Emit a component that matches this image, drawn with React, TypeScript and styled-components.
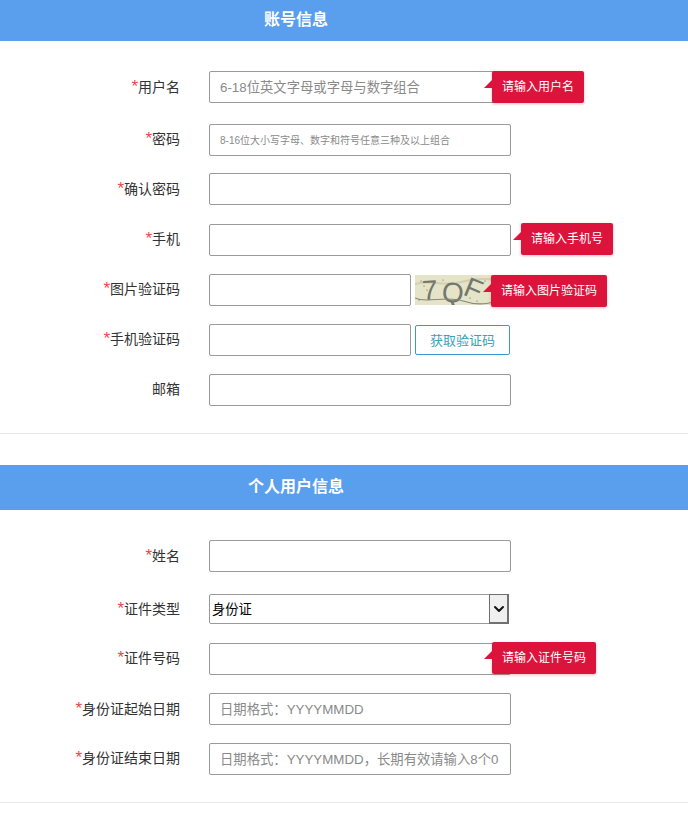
import { createGlobalStyle, styled } from "styled-components";
import { ChevronDown } from "lucide-react";

const GlobalStyle = createGlobalStyle`
  html, body {
    margin: 0;
    padding: 0;
    background: #fff;
  }
  body {
    font-family: "Liberation Sans", "Noto Sans CJK SC", sans-serif;
    color: #333;
  }
`;

const Page = styled.main`
  width: 688px;
  height: 822px;
  overflow: hidden;
`;

const Section = styled.section<{ $gap: number }>`
  padding-bottom: ${(p) => p.$gap}px;
  border-bottom: 1px solid #e8e8e8;
  margin-bottom: 31px;
`;

const SectionTitle = styled.h2<{ $height: number; $indent: number }>`
  margin: 0;
  height: ${(p) => p.$height}px;
  line-height: ${(p) => p.$height - 1}px;
  padding-left: ${(p) => p.$indent}px;
  background: #5a9eee;
  color: #fff;
  font-size: 16px;
  font-weight: 700;
`;

const Row = styled.div<{ $top: number }>`
  position: relative;
  display: flex;
  align-items: center;
  height: 32px;
  margin-top: ${(p) => p.$top}px;
`;

const Label = styled.label<{ $lift?: boolean }>`
  width: 180px;
  margin-right: 29px;
  margin-bottom: ${(p) => (p.$lift ? 2 : 0)}px;
  text-align: right;
  font-size: 14px;
  line-height: 20px;
  color: #333;
`;

const Star = styled.span`
  font-size: 17px;
  line-height: 0;
  color: #e8484a;
`;

const TextInput = styled.input<{ $short?: boolean; $small?: boolean }>`
  box-sizing: border-box;
  width: ${(p) => (p.$short ? 202 : 302)}px;
  height: 32px;
  padding: 0 10px;
  border: 1px solid #999;
  border-radius: 2px;
  outline: none;
  background: #fff;
  font-family: inherit;
  font-size: ${(p) => (p.$small ? 10 : 13.33)}px;
  color: #333;

  &::placeholder {
    color: #8a8a8a;
    opacity: 1;
  }
`;

const SelectBox = styled.div`
  position: relative;
  width: 300px;
  height: 30px;
`;

const Select = styled.select`
  box-sizing: border-box;
  display: block;
  width: 100%;
  height: 100%;
  padding: 0 2px;
  border: 1px solid #999;
  border-radius: 2px;
  outline: none;
  appearance: none;
  background: #fff;
  font-family: inherit;
  font-size: 13.3px;
  color: #000;
`;

const SelectArrow = styled.span`
  position: absolute;
  top: 0;
  right: 0;
  box-sizing: border-box;
  display: flex;
  align-items: center;
  justify-content: center;
  width: 20px;
  height: 30px;
  border: 1px solid #707070;
  border-right-width: 2px;
  border-bottom-width: 2px;
  background: #efefef;
  color: #111;
  pointer-events: none;
`;

const CaptchaImage = styled.svg`
  display: block;
  flex: none;
  width: 96px;
  height: 30px;
  margin-left: 4px;
`;

const CodeButton = styled.button`
  box-sizing: border-box;
  flex: none;
  width: 95px;
  height: 30px;
  margin-left: 4px;
  padding: 0 0 2px;
  border: 1px solid #3c97d3;
  border-radius: 2px;
  background: #fff;
  font-family: inherit;
  font-size: 13px;
  color: #3aa2b8;
`;

const Tip = styled.div<{ $left: number; $shift?: number }>`
  position: absolute;
  top: ${(p) => p.$shift ?? 0}px;
  left: ${(p) => p.$left}px;
  height: 32px;
  padding: 0 10px;
  border-radius: 2px;
  background: #dc143c;
  box-shadow: 0 1px 3px rgba(220, 20, 60, 0.3);
  color: #fff;
  font-size: 12px;
  line-height: 32px;
  white-space: nowrap;

  &::before {
    content: "";
    position: absolute;
    top: 9px;
    left: -8px;
    border-style: solid;
    border-width: 0 0 8px 8px;
    border-color: transparent transparent #dc143c transparent;
  }
`;

const Captcha = () => (
  <CaptchaImage viewBox="0 0 96 30" aria-label="验证码">
    <rect width="96" height="30" fill="#e6e4c8" />
    <path d="M0 9 C14 4 28 12 46 7 S78 3 96 10" fill="none" stroke="#d2d0ae" strokeWidth="2" />
    <g fontFamily="Liberation Sans" fontSize="28" fill="#73776e">
      <text x="7" y="25" transform="rotate(-3 14 15)">7</text>
      <text x="27" y="27" transform="rotate(6 36 17)">Q</text>
      <text x="50" y="24" transform="rotate(22 60 14)">F</text>
    </g>
    <path d="M0 23 C12 29 30 20 48 26 S80 28 96 20" fill="none" stroke="#858a75" strokeWidth="1.1" />
    <g fill="#5c5f55">
      <circle cx="6" cy="6" r="0.6" />
      <circle cx="12" cy="15" r="0.6" />
      <circle cx="4" cy="25" r="0.6" />
      <circle cx="9" cy="11" r="0.6" />
      <circle cx="28" cy="5" r="0.6" />
      <circle cx="36" cy="27" r="0.6" />
      <circle cx="55" cy="23" r="0.6" />
      <circle cx="62" cy="26" r="0.6" />
      <circle cx="70" cy="6" r="0.6" />
    </g>
  </CaptchaImage>
);

const Req = () => <Star>*</Star>;

export default function App() {
  return (
    <Page>
      <GlobalStyle />
      <Section $gap={27}>
        <SectionTitle $height={41} $indent={264}>账号信息</SectionTitle>
        <Row $top={30}>
          <Label><Req />用户名</Label>
          <TextInput placeholder="6-18位英文字母或字母与数字组合" />
          <Tip $left={492}>请输入用户名</Tip>
        </Row>
        <Row $top={21}>
          <Label $lift><Req />密码</Label>
          <TextInput $small placeholder="8-16位大小写字母、数字和符号任意三种及以上组合" />
        </Row>
        <Row $top={17}>
          <Label><Req />确认密码</Label>
          <TextInput />
        </Row>
        <Row $top={19}>
          <Label $lift><Req />手机</Label>
          <TextInput />
          <Tip $left={521} $shift={-1}>请输入手机号</Tip>
        </Row>
        <Row $top={18}>
          <Label $lift><Req />图片验证码</Label>
          <TextInput $short />
          <Captcha />
          <Tip $left={491} $shift={1}>请输入图片验证码</Tip>
        </Row>
        <Row $top={18}>
          <Label $lift><Req />手机验证码</Label>
          <TextInput $short />
          <CodeButton type="button">获取验证码</CodeButton>
        </Row>
        <Row $top={18}>
          <Label $lift>邮箱</Label>
          <TextInput />
        </Row>
      </Section>
      <Section $gap={27}>
        <SectionTitle $height={45} $indent={248}>个人用户信息</SectionTitle>
        <Row $top={30}>
          <Label><Req />姓名</Label>
          <TextInput />
        </Row>
        <Row $top={21}>
          <Label><Req />证件类型</Label>
          <SelectBox>
            <Select defaultValue="身份证">
              <option>身份证</option>
            </Select>
            <SelectArrow>
              <ChevronDown size={16} strokeWidth={3} />
            </SelectArrow>
          </SelectBox>
        </Row>
        <Row $top={18}>
          <Label $lift><Req />证件号码</Label>
          <TextInput />
          <Tip $left={492} $shift={-1}>请输入证件号码</Tip>
        </Row>
        <Row $top={18}>
          <Label><Req />身份证起始日期</Label>
          <TextInput placeholder="日期格式：YYYYMMDD" />
        </Row>
        <Row $top={18}>
          <Label $lift><Req />身份证结束日期</Label>
          <TextInput placeholder="日期格式：YYYYMMDD，长期有效请输入8个0" />
        </Row>
      </Section>
    </Page>
  );
}
